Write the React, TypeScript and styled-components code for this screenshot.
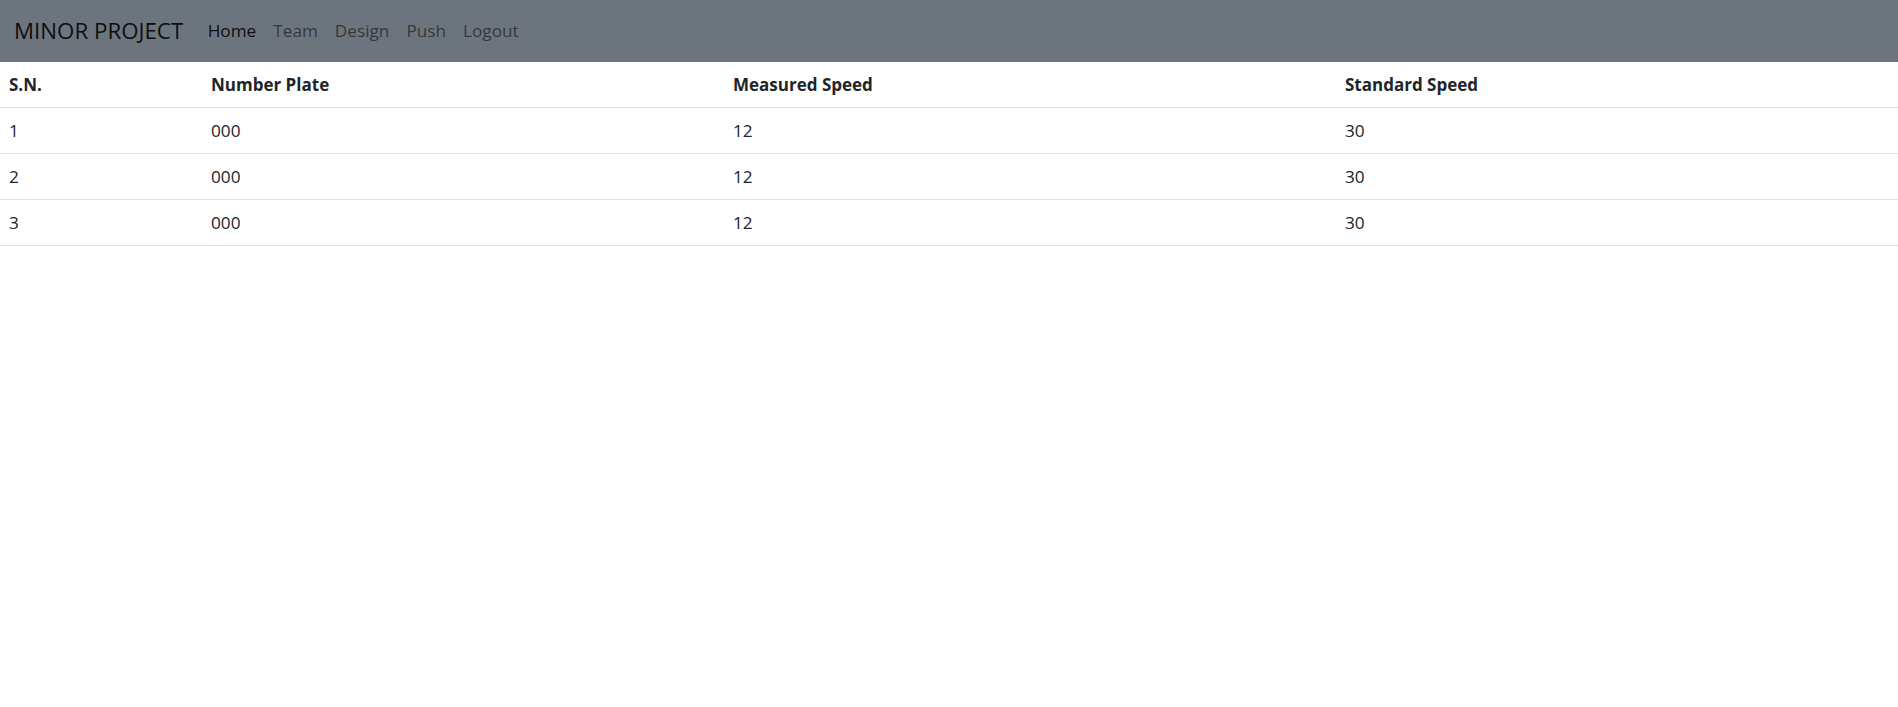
import React from "react";
import styled, { createGlobalStyle } from "styled-components";

const Global = createGlobalStyle`
  html, body { margin: 0; padding: 0; background: #fff; }
  body {
    font-family: "Open Sans", "Noto Sans", sans-serif;
    font-size: 17.2px;
    color: #212529;
  }
  * { box-sizing: border-box; }
`;

const Navbar = styled.nav`
  height: 62px;
  background: #6c757d;
  display: flex;
  align-items: center;
  padding: 0 14px 2px;
`;

const Brand = styled.a`
  font-size: 22.3px;
  color: rgba(0, 0, 0, 0.9);
  text-decoration: none;
  margin-right: 16px;
  white-space: nowrap;
`;

const NavList = styled.ul`
  display: flex;
  list-style: none;
  margin: 0;
  padding: 0;
`;

const NavLink = styled.a<{ $active?: boolean }>`
  display: block;
  padding: 0 8.5px;
  font-size: 17.2px;
  text-decoration: none;
  color: ${(p) => (p.$active ? "rgba(0,0,0,0.9)" : "rgba(0,0,0,0.55)")};
`;

const Table = styled.table`
  width: 100%;
  border-collapse: collapse;
  table-layout: fixed;
`;

const Th = styled.th`
  text-align: left;
  font-weight: 700;
  font-size: 17px;
  height: 45px;
  padding: 0 9px;
  border-bottom: 1px solid #dee2e6;
  vertical-align: middle;
`;

const Td = styled.td`
  height: 46px;
  padding: 0 9px;
  border-bottom: 1px solid #dee2e6;
  vertical-align: middle;
`;

const rows = [
  { sn: 1, plate: "000", measured: 12, standard: 30 },
  { sn: 2, plate: "000", measured: 12, standard: 30 },
  { sn: 3, plate: "000", measured: 12, standard: 30 },
];

export default function App() {
  return (
    <>
      <Global />
      <Navbar>
        <Brand href="#">MINOR PROJECT</Brand>
        <NavList>
          <li><NavLink $active href="#">Home</NavLink></li>
          <li><NavLink href="#">Team</NavLink></li>
          <li><NavLink href="#">Design</NavLink></li>
          <li><NavLink href="#">Push</NavLink></li>
          <li><NavLink href="#">Logout</NavLink></li>
        </NavList>
      </Navbar>
      <Table>
        <colgroup>
          <col style={{ width: "202px" }} />
          <col style={{ width: "522px" }} />
          <col style={{ width: "612px" }} />
          <col />
        </colgroup>
        <thead>
          <tr>
            <Th>S.N.</Th>
            <Th>Number Plate</Th>
            <Th>Measured Speed</Th>
            <Th>Standard Speed</Th>
          </tr>
        </thead>
        <tbody>
          {rows.map((r) => (
            <tr key={r.sn}>
              <Td>{r.sn}</Td>
              <Td>{r.plate}</Td>
              <Td>{r.measured}</Td>
              <Td>{r.standard}</Td>
            </tr>
          ))}
        </tbody>
      </Table>
    </>
  );
}
